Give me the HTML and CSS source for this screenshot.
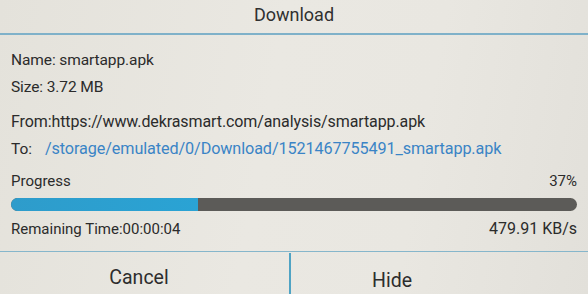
FILE: index.html
```html
<!DOCTYPE html>
<html lang="en">

<head>
    <meta charset="UTF-8">
    <meta name="viewport" content="width=device-width, initial-scale=1.0">
    <title>Download</title>
    <link rel="stylesheet" href="styles.css">
</head>

<body>
    <div class="dialog">
        <div class="dialog-title">Download</div>

        <div class="dialog-body">
            <div class="info">
                <p class="line">Name: smartapp.apk</p>
                <p class="line">Size: 3.72 MB</p>
            </div>

            <div class="paths">
                <p class="line from">From:https://www.dekrasmart.com/analysis/smartapp.apk</p>
                <p class="line"><span class="to-label">To:</span><span class="path">/storage/emulated/0/Download/1521467755491_smartapp.apk</span></p>
            </div>

            <div class="progress-head">
                <span>Progress</span>
                <span>37%</span>
            </div>
            <div class="bar">
                <div class="bar-fill" style="width: 33%"></div>
            </div>
            <div class="progress-foot">
                <span>Remaining Time:00:00:04</span>
                <span>479.91 KB/s</span>
            </div>
        </div>

        <div class="dialog-buttons">
            <button type="button" class="btn btn-cancel">Cancel</button>
            <button type="button" class="btn btn-hide">Hide</button>
        </div>
    </div>
</body>

</html>
```

FILE: styles.css
```css
html,
body {
    height: 100%;
    margin: 0;
}

body {
    background: #e6e4de;
    font-family: Roboto, "Liberation Sans", sans-serif;
    color: #2b2b2b;
    overflow: hidden;
}

.dialog {
    width: 588px;
    height: 294px;
    display: flex;
    flex-direction: column;
    background: linear-gradient(100deg, #e4e2db 0%, #eae8e2 45%, #e9e7e1 70%, #e2e0da 100%);
}

.dialog-title {
    height: 33px;
    line-height: 30px;
    text-align: center;
    font-size: 18px;
    color: #303030;
    border-bottom: 2px solid #7fb1c9;
}

.dialog-body {
    padding: 0 11px 0 11px;
    height: 216px;
}

.line {
    margin: 0;
    font-size: 15.5px;
    line-height: 27px;
    letter-spacing: -0.1px;
}

.line.from {
    font-size: 16px;
}

.info {
    padding-top: 12px;
}

.paths {
    padding-top: 7px;
}

.to-label {
    display: inline-block;
    width: 34px;
}

.path {
    color: #3a84c6;
    font-size: 16.2px;
}

.progress-head,
.progress-foot {
    display: flex;
    justify-content: space-between;
}

.progress-head {
    margin-top: 8px;
    font-size: 15px;
    line-height: 20px;
}

.bar {
    margin-top: 7px;
    height: 13px;
    border-radius: 7px;
    background: #5c5b58;
    overflow: hidden;
}

.bar-fill {
    height: 100%;
    background: linear-gradient(90deg, #2e9ccb, #2aa3d4);
}

.progress-foot {
    margin-top: 8px;
    font-size: 15px;
    line-height: 20px;
}

.progress-foot span:last-child {
    font-size: 16px;
}

.dialog-buttons {
    flex: 1;
    display: flex;
    border-top: 1px solid #86b6cb;
}

.btn {
    box-sizing: border-box;
    border: none;
    background: transparent;
    font-family: inherit;
    font-size: 19.5px;
    color: #2d2d2d;
    padding: 0;
}

.btn-cancel {
    flex: none;
    width: 289px;
    padding-top: 8px;
    padding-right: 11px;
}

.btn-hide {
    flex: 1;
    border-left: 2px solid #4fa3c4;
    margin-top: 1px;
    padding-top: 14px;
    padding-right: 95px;
}
```
